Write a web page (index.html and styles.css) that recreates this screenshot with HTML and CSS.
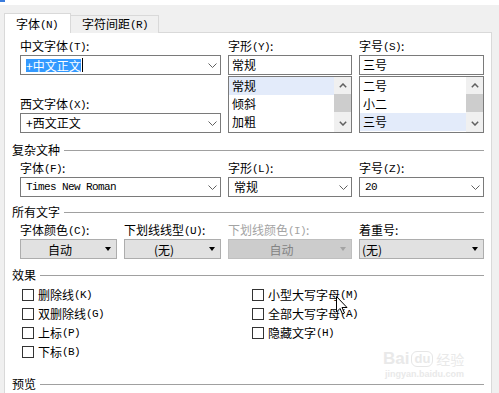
FILE: index.html
```html
<!DOCTYPE html>
<html lang="zh-CN">
<head>
    <meta charset="UTF-8">
    <title>字体</title>
    <link rel="stylesheet" href="styles.css">
</head>
<body>
    <div class="topbar"><span class="mark"></span></div>

    <div class="tabs">
        <div class="tab active">字体<span class="k">(N)</span></div>
        <div class="tab">字符间距<span class="k">(R)</span></div>
    </div>

    <div class="panel">
        <div class="fields grid3">
            <div class="col">
                <div class="lbl">中文字体<span class="k">(T)</span>:</div>
                <div class="combo">
                    <span class="sel">+中文正文</span><span class="caret"></span>
                    <svg class="chev" width="9" height="5" viewBox="0 0 9 5"><polyline points="0.5,0.5 4.5,4.5 8.5,0.5" fill="none" stroke="#606060"/></svg>
                </div>
                <div class="lbl second">西文字体<span class="k">(X)</span>:</div>
                <div class="combo">
                    <span>+西文正文</span>
                    <svg class="chev" width="9" height="5" viewBox="0 0 9 5"><polyline points="0.5,0.5 4.5,4.5 8.5,0.5" fill="none" stroke="#606060"/></svg>
                </div>
            </div>
            <div class="col">
                <div class="lbl">字形<span class="k">(Y)</span>:</div>
                <div class="field">常规</div>
                <div class="listbox">
                    <ul>
                        <li class="on">常规</li>
                        <li>倾斜</li>
                        <li>加粗</li>
                    </ul>
                    <div class="scroll">
                        <span class="arr"><svg width="8" height="5" viewBox="0 0 8 5"><polyline points="0.8,4.2 4,1 7.2,4.2" fill="none" stroke="#606060" stroke-width="1.5"/></svg></span>
                        <span class="thumb"></span>
                        <span class="gap"></span>
                        <span class="arr"><svg width="8" height="5" viewBox="0 0 8 5"><polyline points="0.8,0.8 4,4 7.2,0.8" fill="none" stroke="#606060" stroke-width="1.5"/></svg></span>
                    </div>
                </div>
            </div>
            <div class="col">
                <div class="lbl">字号<span class="k">(S)</span>:</div>
                <div class="field">三号</div>
                <div class="listbox">
                    <ul>
                        <li>二号</li>
                        <li>小二</li>
                        <li class="on">三号</li>
                    </ul>
                    <div class="scroll">
                        <span class="arr"><svg width="8" height="5" viewBox="0 0 8 5"><polyline points="0.8,4.2 4,1 7.2,4.2" fill="none" stroke="#606060" stroke-width="1.5"/></svg></span>
                        <span class="thumb"></span>
                        <span class="gap"></span>
                        <span class="arr"><svg width="8" height="5" viewBox="0 0 8 5"><polyline points="0.8,0.8 4,4 7.2,0.8" fill="none" stroke="#606060" stroke-width="1.5"/></svg></span>
                    </div>
                </div>
            </div>
        </div>

        <div class="group g-complex">复杂文种</div>
        <div class="fields grid3 row">
            <div class="col">
                <div class="lbl">字体<span class="k">(F)</span>:</div>
                <div class="combo">
                    <span class="mono">Times New Roman</span>
                    <svg class="chev" width="9" height="5" viewBox="0 0 9 5"><polyline points="0.5,0.5 4.5,4.5 8.5,0.5" fill="none" stroke="#606060"/></svg>
                </div>
            </div>
            <div class="col">
                <div class="lbl">字形<span class="k">(L)</span>:</div>
                <div class="combo">
                    <span>常规</span>
                    <svg class="chev" width="9" height="5" viewBox="0 0 9 5"><polyline points="0.5,0.5 4.5,4.5 8.5,0.5" fill="none" stroke="#606060"/></svg>
                </div>
            </div>
            <div class="col">
                <div class="lbl">字号<span class="k">(Z)</span>:</div>
                <div class="combo">
                    <span class="mono">20</span>
                    <svg class="chev" width="9" height="5" viewBox="0 0 9 5"><polyline points="0.5,0.5 4.5,4.5 8.5,0.5" fill="none" stroke="#606060"/></svg>
                </div>
            </div>
        </div>

        <div class="group g-all">所有文字</div>
        <div class="fields grid4 row">
            <div class="col">
                <div class="lbl">字体颜色<span class="k">(C)</span>:</div>
                <div class="btn"><span class="txt">自动</span><span class="drop"></span></div>
            </div>
            <div class="col">
                <div class="lbl">下划线线型<span class="k">(U)</span>:</div>
                <div class="btn"><span class="txt">(无)</span><span class="drop"></span></div>
            </div>
            <div class="col">
                <div class="lbl off">下划线颜色<span class="k">(I)</span>:</div>
                <div class="btn off"><span class="txt">自动</span><span class="drop"></span></div>
            </div>
            <div class="col">
                <div class="lbl">着重号:</div>
                <div class="btn left"><span class="txt">(无)</span><span class="drop"></span></div>
            </div>
        </div>

        <div class="group g-effects">效果</div>
        <div class="fields effects">
            <div class="col">
                <div class="chk"><span class="box"></span>删除线<span class="k">(K)</span></div>
                <div class="chk"><span class="box"></span>双删除线<span class="k">(G)</span></div>
                <div class="chk"><span class="box"></span>上标<span class="k">(P)</span></div>
                <div class="chk"><span class="box"></span>下标<span class="k">(B)</span></div>
            </div>
            <div class="col">
                <div class="chk"><span class="box"></span>小型大写字母<span class="k">(M)</span></div>
                <div class="chk"><span class="box"></span>全部大写字母<span class="k">(A)</span></div>
                <div class="chk"><span class="box"></span>隐藏文字<span class="k">(H)</span></div>
            </div>
        </div>

        <div class="group g-preview">预览</div>
    </div>

    <!-- 鼠标指针 -->
    <svg class="cursor" width="12" height="19" viewBox="0 0 12 19">
        <polygon points="0.5,0.5 0.5,16 4,12.5 6.5,18 8.5,17 6,11.5 11,11.5" fill="#fff" stroke="#000" stroke-width="1"/>
    </svg>

    <!-- 水印 -->
    <div class="watermark">
        <div class="wm-top"><span class="wm-bai">Bai</span><span class="wm-du">du</span><span class="wm-jy">经验</span></div>
        <div class="wm-url">jingyan.baidu.com</div>
    </div>
</body>
</html>
```

FILE: styles.css
```css
* {
    margin: 0;
    padding: 0;
    box-sizing: border-box;
}
html, body {
    overflow: hidden;
}
body {
    width: 499px;
    height: 393px;
    background: #f0f0f0;
    font-family: "Noto Sans CJK SC", sans-serif;
    font-size: 12px;
    color: #000;
    position: relative;
}
.k, .mono {
    font-family: "Liberation Mono", monospace;
    font-size: 11px;
    letter-spacing: -0.6px;
}
.k {
    vertical-align: 1px;
}
.topbar {
    height: 5px;
    background: #fff;
}
.topbar .mark {
    display: block;
    width: 5px;
    height: 2px;
    background: #3b7ddd;
}

/* tabs */
.tabs {
    display: flex;
    align-items: flex-end;
    height: 20px;
    margin-top: 8px;
    padding-left: 4px;
}
.tab {
    height: 18px;
    width: 88px;
    padding-left: 11px;
    line-height: 16px;
    border: 1px solid #d9d9d9;
    border-left: none;
    border-bottom: none;
    background: #f0f0f0;
    white-space: nowrap;
}
.tab.active {
    position: relative;
    z-index: 1;
    height: 20px;
    width: 67px;
    line-height: 19px;
    border-left: 1px solid #d9d9d9;
    background: #fff;
}

.panel {
    margin: -1px 7px 0 4px;
    border: 1px solid #d9d9d9;
    background: #fff;
    padding: 6px 7px 30px;
}
.fields {
    margin-left: 8px;
}
.grid3 {
    display: grid;
    grid-template-columns: 201px 124px 125px;
    column-gap: 7px;
}
.grid4 {
    display: grid;
    grid-template-columns: 97px 97px 124px 125px;
    column-gap: 7px;
}
.row {
    margin-top: 4px;
}
.lbl {
    height: 14px;
    line-height: 14px;
    margin-bottom: 2px;
    white-space: nowrap;
}
.lbl.second {
    margin-top: 22px;
}
.lbl.off {
    color: #a3a3a3;
}

/* inputs */
.combo, .field {
    height: 20px;
    border: 1px solid #7a7a7a;
    background: #fff;
    display: flex;
    align-items: center;
    line-height: 18px;
    padding: 0 3px;
    white-space: nowrap;
}
.combo {
    padding-left: 5px;
}
.combo .chev {
    margin-left: auto;
}
.sel {
    display: inline-block;
    height: 13px;
    line-height: 13px;
    background: #3399ff;
    color: #fff;
}
.caret {
    display: inline-block;
    width: 1px;
    height: 14px;
    background: #000;
    margin-left: 1px;
}
.field {
    margin-bottom: 1px;
}

/* list boxes */
.listbox {
    height: 57px;
    border: 1px solid #7a7a7a;
    display: flex;
}
.listbox ul {
    flex: 1;
    list-style: none;
}
.listbox li {
    height: 18px;
    line-height: 18px;
    padding-left: 3px;
}
.listbox li.on {
    background: #e3ebfa;
}
.scroll {
    width: 17px;
    background: #f0f0f0;
    display: flex;
    flex-direction: column;
}
.scroll .arr {
    height: 17px;
    display: flex;
    align-items: center;
    justify-content: center;
}
.scroll .thumb {
    height: 18px;
    background: #cdcdcd;
}
.scroll .gap {
    flex: 1;
}

/* group headers */
.group {
    display: flex;
    align-items: center;
    height: 14px;
    line-height: 14px;
}
.group::after {
    content: "";
    flex: 1;
    height: 1px;
    background: #a0a0a0;
    margin-left: 4px;
}
.g-complex {
    margin-top: 10px;
}
.g-all {
    margin-top: 8px;
}
.g-effects {
    margin-top: 9px;
}
.g-preview {
    margin-top: 16px;
}

/* drop buttons */
.btn {
    height: 20px;
    border: 1px solid #adadad;
    background: #e1e1e1;
    display: flex;
    align-items: center;
}
.btn .txt {
    flex: 1;
    text-align: center;
}
.btn.left .txt {
    text-align: left;
    padding-left: 2px;
}
.btn .drop {
    width: 17px;
    display: flex;
    justify-content: center;
}
.btn .drop::before {
    content: "";
    border-top: 4px solid #000;
    border-left: 3.5px solid transparent;
    border-right: 3.5px solid transparent;
}
.btn.off {
    background: #cccccc;
    border-color: #bfbfbf;
    color: #838383;
}
.btn.off .drop::before {
    border-top-color: #a3a3a3;
}

/* checkboxes */
.effects {
    display: grid;
    grid-template-columns: 230px auto;
    padding-left: 2px;
    margin-top: 3px;
}
.chk {
    display: flex;
    align-items: center;
    height: 19px;
    white-space: nowrap;
}
.chk .box {
    width: 12px;
    height: 12px;
    border: 1px solid #333;
    background: #fff;
    margin-right: 4px;
}

.cursor {
    position: absolute;
    left: 336px;
    top: 296px;
}
.watermark {
    position: absolute;
    left: 383px;
    top: 349px;
    color: #e9e9e9;
    font-family: "Liberation Sans", sans-serif;
}
.wm-top {
    display: flex;
    align-items: center;
    height: 20px;
}
.wm-bai {
    font-size: 17px;
    font-weight: bold;
}
.wm-du {
    font-size: 13px;
    font-weight: bold;
    border: 1px solid #e6e6e6;
    border-radius: 6px;
    padding: 0 2px;
    line-height: 14px;
    margin: 0 3px 0 2px;
}
.wm-jy {
    font-family: "Noto Sans CJK SC", sans-serif;
    font-size: 14px;
}
.wm-url {
    font-size: 9px;
    line-height: 10px;
    font-weight: bold;
    margin-left: 2px;
}
```
